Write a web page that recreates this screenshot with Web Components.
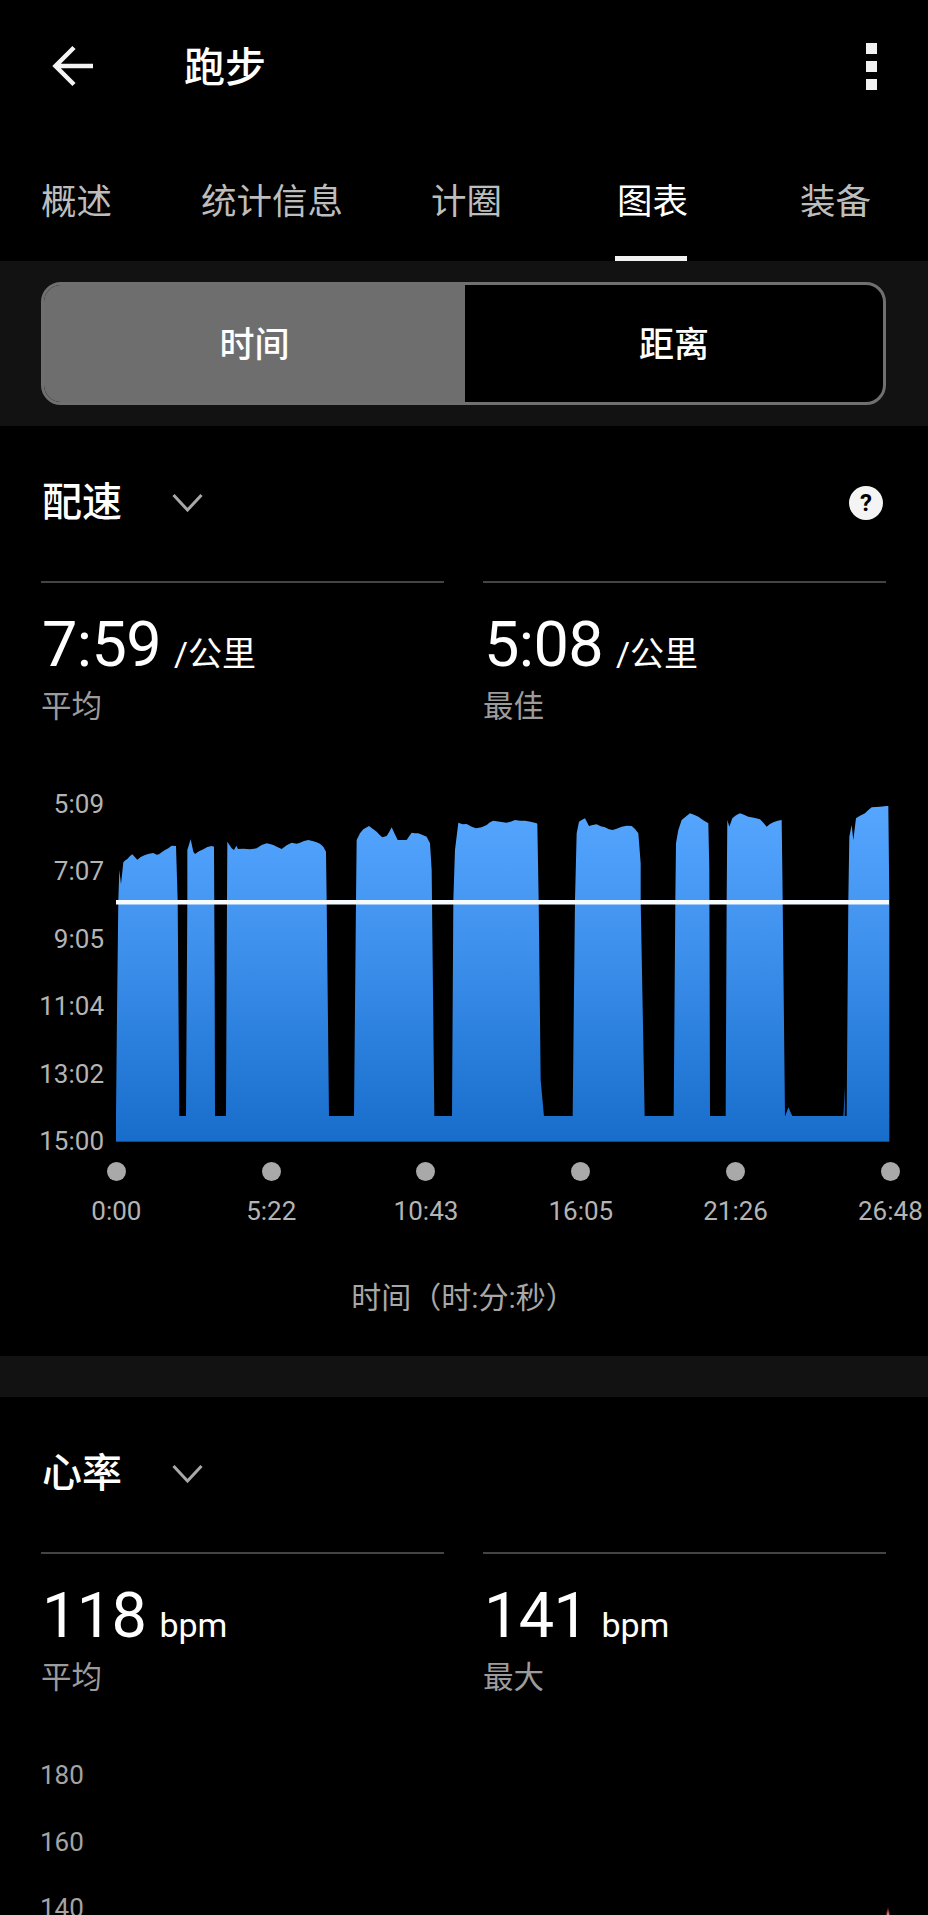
<!DOCTYPE html>
<html lang="zh-CN"><head><meta charset="utf-8"><title>跑步</title>
<style>
html,body{margin:0;background:#000;}
body{width:928px;height:1915px;overflow:hidden;font-family:Roboto,"Noto Sans CJK SC",sans-serif;color:#fff;}
</style></head><body>
<run-header>跑步</run-header>
<tab-bar>
  <tab-item style="margin-left:41px">概述</tab-item>
  <tab-item style="margin-left:89px">统计信息</tab-item>
  <tab-item style="margin-left:88px">计圈</tab-item>
  <tab-item active style="margin-left:115px">图表</tab-item>
  <tab-item style="margin-left:112px">装备</tab-item>
</tab-bar>
<seg-toggle><span slot="a">时间</span><span slot="b">距离</span></seg-toggle>
<metric-section heading="配速" help>
  <stat-block slot="stats" unit="/公里" label="平均">7:59</stat-block>
  <stat-block slot="stats" unit="/公里" label="最佳">5:08</stat-block>
  <pace-chart></pace-chart>
</metric-section>
<band-gap></band-gap>
<metric-section heading="心率">
  <stat-block slot="stats" unit="bpm" label="平均">118</stat-block>
  <stat-block slot="stats" unit="bpm" label="最大">141</stat-block>
  <hr-chart></hr-chart>
</metric-section>
<script>
function def(name, html){
  customElements.define(name, class extends HTMLElement{
    constructor(){super();this.attachShadow({mode:'open'});}
    connectedCallback(){this.shadowRoot.innerHTML=typeof html==='function'?html(this):html;}
  });
}
def('run-header',`<style>
:host{display:flex;align-items:center;height:132px;box-sizing:border-box;padding:0 51px 0 50px;}
svg{display:block;flex:none}
.t{margin-left:89px;padding-top:4px;font-size:41px;line-height:50px;font-weight:500;flex:1}
</style>
<svg width="45" height="44" viewBox="0 0 45 44" fill="none" stroke="#f4f4f4" stroke-width="4.500"><path d="M6 22H43M24 3.500 5.500 22 24 40.500"/></svg>
<div class="t"><slot></slot></div>
<svg width="11" height="47" viewBox="0 0 11 47" fill="#f2f2f2"><rect width="11" height="11"/><rect y="18" width="11" height="11"/><rect y="36" width="11" height="11"/></svg>`);
def('tab-bar',`<style>:host{display:flex;height:129px;background:#000}</style><slot></slot>`);
def('tab-item',`<style>
:host{display:block;position:relative;flex:none;padding-top:48px;font-size:35.500px;line-height:44px;color:#bdbdbd}
:host([active]){color:#fff}
:host([active])::after{content:"";position:absolute;left:-2px;right:1px;bottom:0;height:5px;background:#f2f2f2}
</style><slot></slot>`);
def('seg-toggle',`<style>
:host{display:block;background:#121212;padding:21px 42px 21px 41px}
.w{display:grid;grid-template-columns:421px 1fr;height:123px;box-sizing:border-box;border:3px solid #707070;border-radius:20px;overflow:hidden;background:#000}
.c{display:flex;align-items:center;justify-content:center;font-size:35px;font-weight:500;padding-bottom:4px}
.a{background:#6e6e6e}
</style><div class="w"><div class="c a"><slot name="a"></slot></div><div class="c"><slot name="b"></slot></div></div>`);
def('metric-section',h=>`<style>
:host{display:block;padding:52px 42px 0 41px}
.head{display:flex;align-items:center;height:50px}
h2{margin:0;font-size:40px;line-height:50px;font-weight:500;width:131px;padding-left:1px;box-sizing:border-box}
svg{display:block}
.help{margin-left:auto;margin-right:3px;width:34px;height:34px;border-radius:50%;background:#f4f4f4;color:#000;font:700 24px/34px Roboto,sans-serif;text-align:center}
.stats{display:grid;grid-template-columns:403px 403px;column-gap:39px;margin-top:53px}
</style>
<div class="head"><h2>${h.getAttribute('heading')}</h2>
<svg width="31" height="18" viewBox="0 0 31 18" fill="none" stroke="#a8a8a8" stroke-width="3"><path d="M1.500 1 15.500 16 29.500 1"/></svg>
${h.hasAttribute('help')?'<div class="help">?</div>':''}</div>
<div class="stats"><slot name="stats"></slot></div>
<slot></slot>`);
def('stat-block',h=>`<style>
:host{display:block;border-top:2px solid #444;padding-top:25px}
.v{display:flex;align-items:baseline;height:73px;padding-left:1px}
.n{font-size:63px;line-height:73px;letter-spacing:-.6px}
.u{font-size:34px;line-height:40px;margin-left:13px}
.l{margin-top:6px;font-size:30.500px;line-height:40px;color:#9c9c9c}
</style><div class="v"><span class="n"><slot></slot></span><span class="u">${h.getAttribute('unit')}</span></div><div class="l">${h.getAttribute('label')}</div>`);
def('band-gap',`<style>:host{display:block;height:41px;background:#121212}</style>`);
def('pace-chart',`<style>
:host{display:block;margin:59px -42px 0 -41px;width:928px;height:570px;font-size:26px;color:#b4b4b4}
.plot{display:grid;grid-template-columns:104px 776px;column-gap:12px;height:371px}
.y{display:flex;flex-direction:column;row-gap:33.400px;text-align:right;padding-top:1px}
.y span{display:block;height:34px;line-height:34px}
svg{display:block}
.ticks{display:grid;grid-template-columns:repeat(6,154.800px);margin-left:39px;margin-top:5px;justify-items:center;width:929px}
.ticks i{display:block;width:19px;height:19px;border-radius:50%;background:#a9a9a9}
.ticks span{margin-top:14px;line-height:32px;white-space:nowrap}
.title{margin-top:51px;padding-right:1px;text-align:center;font-size:30px;line-height:40px;color:#a8a8a8}
</style>
<div class="plot"><div class="y"><span>5:09</span><span>7:07</span><span>9:05</span><span>11:04</span><span>13:02</span><span>15:00</span></div>
<svg width="776" height="356" viewBox="116 786 776 356">
<defs><linearGradient id="g" gradientUnits="userSpaceOnUse" x1="0" y1="78" x2="0" y2="1085"><stop offset="0" stop-color="#56a6ff"/><stop offset=".3" stop-color="#4597f2"/><stop offset=".65" stop-color="#2f83e0"/><stop offset="1" stop-color="#196dca"/></linearGradient></defs>
<g transform="translate(100 780) scale(.33333)" fill="url(#g)">
<rect x="48" y="1008" width="2320" height="77"/>
<path d="M48 1010 51 700 55 360 58 270 63 313 70 247 76 241 82 237 90 228 97 223 105 232 112 239 122 231 135 225 147 221 160 219 170 224 177 223 186 216 195 210 205 205 215 197 228 198 233 360 238 1010Z"/>
<path d="M258 1010 262 360 262 210 272 178 280 215 285 222 297 214 310 208 322 201 335 198 342 200 344 600 345 1010Z"/>
<path d="M378 1010 381 360 382 185 395 205 402 210 409 197 414 207 430 206 450 208 470 205 485 195 500 190 510 192 520 195 532 201 545 207 560 196 575 188 590 191 600 188 612 183 625 180 640 184 650 187 660 191 670 200 678 215 680 360 687 1010Z"/>
<path d="M762 1010 768 360 770 180 780 160 790 148 807 138 818 146 830 155 840 166 847 172 860 168 868 155 875 142 884 161 893 180 920 180 928 168 935 158 945 160 955 160 968 165 980 170 990 190 995 270 996 360 1003 1010Z"/>
<path d="M1056 1010 1060 360 1065 210 1075 128 1088 133 1100 132 1115 140 1128 145 1145 142 1160 135 1170 127 1180 122 1200 125 1220 128 1232 125 1245 120 1260 122 1275 122 1292 125 1310 130 1312 132 1316 360 1322 900 1332 1010Z"/>
</g>
<g transform="translate(510 780) scale(.33333)" fill="url(#g)">
<path d="M188 1010 195 360 200 160 207 125 215 120 225 115 237 138 248 135 260 133 272 139 285 142 297 148 308 150 320 146 335 140 350 137 365 138 375 147 385 160 392 250 392 360 404 1010Z"/>
<path d="M491 1010 496 360 498 190 505 150 515 120 525 112 540 100 552 104 565 110 580 121 595 130 598 270 600 1010Z"/>
<path d="M647 1010 650 360 652 120 658 140 667 115 678 106 690 100 702 104 715 110 732 113 750 118 760 128 770 140 780 132 790 127 803 122 815 120 817 270 825 1010 835 982 848 1010Z"/>
<path d="M1000 1010 1005 920 1004 1010ZM1010 1010 1015 360 1018 170 1025 135 1030 180 1038 115 1050 107 1065 100 1075 90 1085 82 1110 80 1130 78 1135 78 1138 360 1138 1010Z"/>
</g>
<rect x="116" y="900" width="773" height="4.500" fill="#f6fbff"/>
</svg></div>
<div class="ticks"><i></i><i></i><i></i><i></i><i></i><i></i>
<span>0:00</span><span>5:22</span><span>10:43</span><span>16:05</span><span>21:26</span><span>26:48</span></div>
<div class="title">时间（时:分:秒）</div>`);
def('hr-chart',`<style>
:host{display:block;position:relative;margin:60px -42px 0 -41px;width:928px;height:160px;font-size:26px;color:#a4a4a4;padding-left:40px;box-sizing:border-box}
span{display:block;height:34px;line-height:34px;margin-bottom:32.500px}
svg{position:absolute;left:880px;top:146px}
</style><span>180</span><span>160</span><span>140</span>
<svg width="16" height="14" viewBox="0 0 16 14"><path d="M4.500 14 8 3 11.500 14Z" fill="#5c1f1f"/><path d="M6.500 14 8 6 9.500 14Z" fill="#dca3a3"/></svg>`);
</script>
</body></html>
